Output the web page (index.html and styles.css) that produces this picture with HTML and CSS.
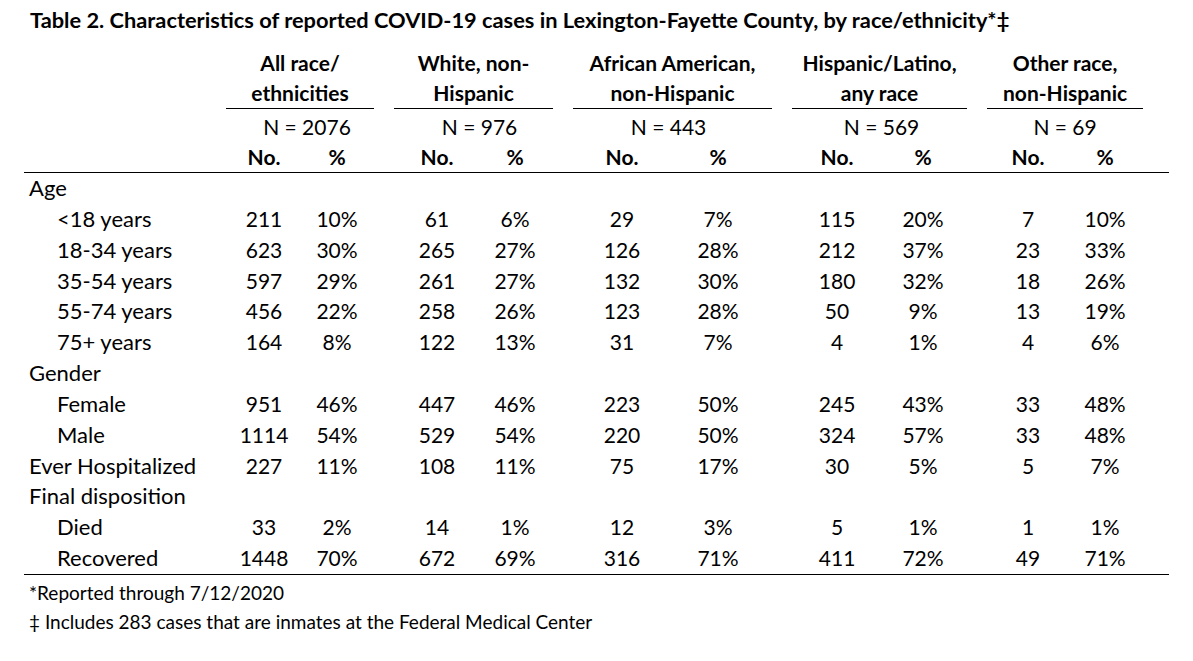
FILE: index.html
```html
<!DOCTYPE html>
<html lang="en">
<head>
<meta charset="utf-8">
<title>Table 2</title>
<link rel="stylesheet" href="styles.css">
</head>
<body>
<div class="page">
  <div class="title">Table 2. Characteristics of reported COVID-19 cases in Lexington-Fayette County, by race/ethnicity*‡</div>
  <table class="tbl">
    <colgroup>
      <col class="c-label">
      <col class="c1n"><col class="c1p">
      <col class="c2n"><col class="c2p">
      <col class="c3n"><col class="c3p">
      <col class="c4n"><col class="c4p">
      <col class="c5n"><col class="c5p">
      <col class="c-end">
    </colgroup>
    <thead>
      <tr class="grp">
        <th></th>
        <th colspan="2"><div class="grp-label">All race/<br>ethnicities</div></th>
        <th colspan="2"><div class="grp-label">White, non-<br>Hispanic</div></th>
        <th colspan="2"><div class="grp-label">African American,<br>non-Hispanic</div></th>
        <th colspan="2"><div class="grp-label">Hispanic/Latino,<br>any race</div></th>
        <th colspan="2"><div class="grp-label">Other race,<br>non-Hispanic</div></th>
        <th></th>
      </tr>
      <tr class="nrow">
        <th></th>
        <th colspan="2" class="n1">N = 2076</th>
        <th colspan="2" class="n2">N = 976</th>
        <th colspan="2" class="n3">N = 443</th>
        <th colspan="2" class="n4">N = 569</th>
        <th colspan="2" class="n5">N = 69</th>
        <th></th>
      </tr>
      <tr class="sub">
        <th></th>
        <th>No.</th><th>%</th>
        <th>No.</th><th>%</th>
        <th>No.</th><th>%</th>
        <th>No.</th><th>%</th>
        <th>No.</th><th>%</th>
        <th></th>
      </tr>
    </thead>
    <tbody>
      <tr><td class="lbl">Age</td><td></td><td></td><td></td><td></td><td></td><td></td><td></td><td></td><td></td><td></td><td></td></tr>
      <tr><td class="lbl ind">&lt;18 years</td><td>211</td><td>10%</td><td>61</td><td>6%</td><td>29</td><td>7%</td><td>115</td><td>20%</td><td>7</td><td>10%</td><td></td></tr>
      <tr><td class="lbl ind">18-34 years</td><td>623</td><td>30%</td><td>265</td><td>27%</td><td>126</td><td>28%</td><td>212</td><td>37%</td><td>23</td><td>33%</td><td></td></tr>
      <tr><td class="lbl ind">35-54 years</td><td>597</td><td>29%</td><td>261</td><td>27%</td><td>132</td><td>30%</td><td>180</td><td>32%</td><td>18</td><td>26%</td><td></td></tr>
      <tr><td class="lbl ind">55-74 years</td><td>456</td><td>22%</td><td>258</td><td>26%</td><td>123</td><td>28%</td><td>50</td><td>9%</td><td>13</td><td>19%</td><td></td></tr>
      <tr><td class="lbl ind">75+ years</td><td>164</td><td>8%</td><td>122</td><td>13%</td><td>31</td><td>7%</td><td>4</td><td>1%</td><td>4</td><td>6%</td><td></td></tr>
      <tr><td class="lbl">Gender</td><td></td><td></td><td></td><td></td><td></td><td></td><td></td><td></td><td></td><td></td><td></td></tr>
      <tr><td class="lbl ind">Female</td><td>951</td><td>46%</td><td>447</td><td>46%</td><td>223</td><td>50%</td><td>245</td><td>43%</td><td>33</td><td>48%</td><td></td></tr>
      <tr><td class="lbl ind">Male</td><td>1114</td><td>54%</td><td>529</td><td>54%</td><td>220</td><td>50%</td><td>324</td><td>57%</td><td>33</td><td>48%</td><td></td></tr>
      <tr><td class="lbl">Ever Hospitalized</td><td>227</td><td>11%</td><td>108</td><td>11%</td><td>75</td><td>17%</td><td>30</td><td>5%</td><td>5</td><td>7%</td><td></td></tr>
      <tr><td class="lbl">Final disposition</td><td></td><td></td><td></td><td></td><td></td><td></td><td></td><td></td><td></td><td></td><td></td></tr>
      <tr><td class="lbl ind">Died</td><td>33</td><td>2%</td><td>14</td><td>1%</td><td>12</td><td>3%</td><td>5</td><td>1%</td><td>1</td><td>1%</td><td></td></tr>
      <tr class="last"><td class="lbl ind">Recovered</td><td>1448</td><td>70%</td><td>672</td><td>69%</td><td>316</td><td>71%</td><td>411</td><td>72%</td><td>49</td><td>71%</td><td></td></tr>
    </tbody>
  </table>
  <div class="notes">
    <p class="note">*Reported through 7/12/2020</p>
    <p class="note">‡ Includes 283 cases that are inmates at the Federal Medical Center</p>
  </div>
</div>
</body>
</html>
```

FILE: styles.css
```css
* { box-sizing: border-box; }

body {
  margin: 0;
  background: #fff;
  color: #000;
  font-family: Lato, "Carlito", "Liberation Sans", sans-serif;
}

.page {
  padding: 5px 0 0 24px;
}

.title {
  font-size: 21.8px;
  font-weight: 700;
  line-height: 30px;
  padding-left: 6px;
  margin-bottom: 13px;
  white-space: nowrap;
}

.tbl {
  border-collapse: collapse;
  table-layout: fixed;
  width: 1145px;
  font-size: 21px;
}

.c-label { width: 192px; }
.c1n { width: 96px; }  .c1p { width: 72px; }
.c2n { width: 106px; } .c2p { width: 73px; }
.c3n { width: 118px; } .c3p { width: 101px; }
.c4n { width: 110px; } .c4p { width: 85px; }
.c5n { width: 102px; } .c5p { width: 74px; }
.c-end { width: 16px; }

.tbl th,
.tbl td {
  padding: 0;
  text-align: center;
  vertical-align: middle;
  white-space: nowrap;
}

.tbl td {
  line-height: 30.85px;
  font-weight: 400;
}

.grp th {
  font-weight: 700;
  vertical-align: bottom;
}

.grp-label {
  margin: 0 10px;
  line-height: 30px;
  border-bottom: 1px solid #000;
}

.nrow th {
  font-weight: 400;
  line-height: 31px;
  padding-top: 2px;
}

.n1 { padding-left: 14px !important; }
.n2 { padding-left: 12px !important; }
.n3 { padding-right: 8px !important; }
.n4 { padding-left: 4px !important; }

.sub th {
  font-weight: 700;
  line-height: 30px;
  border-bottom: 1px solid #000;
}

/* percent columns: shift their centre toward the count column */
.tbl tbody td:nth-child(3),  .sub th:nth-child(3)  { padding-right: 22px; }
.tbl tbody td:nth-child(5),  .sub th:nth-child(5)  { padding-right: 23px; }
.tbl tbody td:nth-child(7),  .sub th:nth-child(7)  { padding-right: 27px; }
.tbl tbody td:nth-child(9),  .sub th:nth-child(9)  { padding-right: 23px; }
.tbl tbody td:nth-child(11), .sub th:nth-child(11) { padding-right: 22px; }

.tbl td.lbl {
  text-align: left;
  padding-left: 5px;
  font-size: 22px;
}

.tbl td.lbl.ind {
  padding-left: 33px;
}

.last td {
  border-bottom: 1px solid #000;
}

.notes {
  padding-left: 5px;
  padding-top: 3px;
}

.note {
  margin: 0;
  font-size: 19px;
  line-height: 29px;
}
```
